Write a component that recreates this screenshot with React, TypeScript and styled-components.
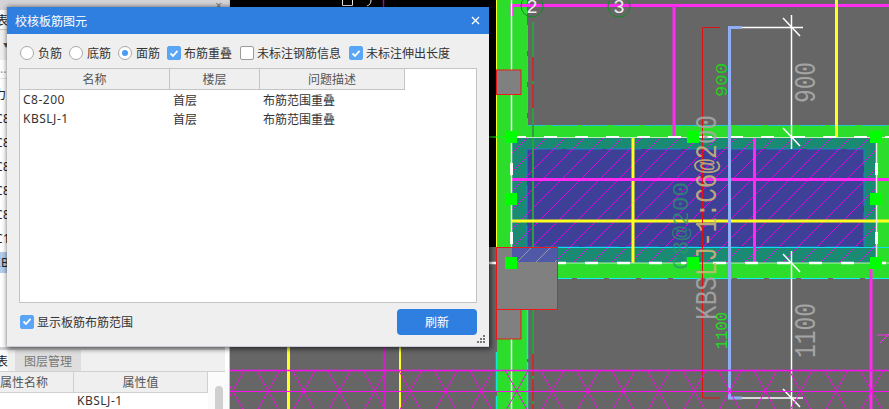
import React from "react";
import styled, { createGlobalStyle } from "styled-components";

const Global = createGlobalStyle`
  html, body { margin: 0; padding: 0; background: #666; }
  body { font-family: "Noto Sans", "Noto Sans CJK SC", sans-serif; font-size: 12px; color: #333; }
`;

const Page = styled.div`
  position: relative;
  display: flex;
  width: 889px;
  height: 409px;
  overflow: hidden;
`;

/* ---------- left panel ---------- */
const Sidebar = styled.aside`
  display: flex;
  flex-direction: column;
  width: 225px;
  height: 409px;
  background: #fff;
  border-right: 1px solid #c4c4c4;
  padding-right: 4px;
  flex: none;
`;
const PanelTop = styled.div`
  display: flex;
  justify-content: flex-end;
  align-items: center;
  height: 10px;
  padding-right: 7px;
  margin-right: -4px;
  background: #d4d4d8;
  color: #777;
  font-size: 12px;
  overflow: hidden;
`;
const ClipTab = styled.div`
  display: flex;
  justify-content: flex-end;
  align-items: center;
  width: 8px;
  height: 100%;
  overflow: hidden;
  white-space: nowrap;
  background: #fafafa;
  flex: none;
  color: #222;
  font-size: 12px;
`;
const TopTabs = styled.div`
  height: 19px;
  border-bottom: 1px solid #c8c8c8;
  background: #f4f4f4;
`;
const ToolRow = styled.div`
  height: 30px;
  background: #f0f0f0;
  color: #555;
  font-size: 6px;
  line-height: 30px;
  padding-left: 3px;
`;
const Search = styled.div`
  height: 18px;
  line-height: 18px;
  background: #fff;
  color: #999;
  border-bottom: 1px solid #e4e4e4;
  margin-bottom: 5px;
`;
const ListRow = styled.div<{ $selected?: boolean }>`
  height: 21px;
  margin-bottom: 3px;
  line-height: 21px;
  white-space: nowrap;
  overflow: hidden;
  font-size: 12px;
  letter-spacing: 0.5px;
  color: #222;
  background: ${(p) => (p.$selected ? "#b4cdec" : "transparent")};
`;
const RowText = styled.span<{ $shift: number }>`
  display: inline-block;
  margin-left: ${(p) => p.$shift}px;
`;
const Spacer = styled.div`
  flex: 1;
`;
const BottomGap = styled.div`
  height: 3px;
  background: #d0d0d0;
  flex: none;
`;
const BottomTabs = styled.div`
  display: flex;
  gap: 7px;
  height: 22px;
  box-sizing: border-box;
  background: #f0f0f0;
  border-bottom: 1px solid #d0d0d0;
  flex: none;
`;
const LayerTab = styled.div`
  display: flex;
  align-items: center;
  justify-content: center;
  width: 66px;
  background: #dedede;
  color: #777;
  font-size: 12px;
`;
const PropArea = styled.div`
  flex: none;
  height: 37px;
  display: flex;
  margin-right: -4px;
`;
const PropTable = styled.div`
  width: 208px;
  display: grid;
  grid-template-columns: 74px 134px;
  grid-template-rows: 21px 16px;
`;
const PropHead = styled.div<{ $left?: boolean }>`
  display: flex;
  align-items: center;
  justify-content: ${(p) => (p.$left ? "flex-start" : "center")};
  background: #efefef;
  border-right: 1px solid #cfcfcf;
  border-bottom: 1px solid #cfcfcf;
  color: #555;
  font-size: 12px;
`;
const PropCell = styled.div`
  padding-left: 3px;
  background: #fff;
  color: #333;
  font-size: 12px;
  letter-spacing: 0.5px;
  line-height: 16px;
`;
const ScrollTrack = styled.div`
  flex: 1;
  display: flex;
  justify-content: center;
  padding: 14px 0 0 0;
  background: #fbfbfb;
`;
const ScrollThumb = styled.div`
  width: 8px;
  background: #cfcfcf;
  border-radius: 4px 4px 0 0;
`;

/* ---------- canvas ---------- */
const Canvas = styled.main`
  flex: 1;
  height: 409px;
  background: #000;
`;
const Drawing = styled.svg`
  display: block;
`;

/* ---------- dialog ---------- */
const Dialog = styled.section`
  position: absolute;
  left: 7px;
  top: 7px;
  width: 482px;
  height: 340px;
  display: flex;
  flex-direction: column;
  background: #efefef;
  box-shadow: 1px 1px 5px 1px rgba(0, 0, 0, 0.6);
  border-bottom: 1px solid #c8ccd8;
  box-sizing: border-box;
`;
const TitleBar = styled.header`
  display: flex;
  justify-content: space-between;
  align-items: center;
  height: 27px;
  padding: 0 9px 0 8px;
  background: #2e7fe0;
  color: #fff;
  font-size: 12px;
  flex: none;
`;
const CloseX = styled.svg`
  display: block;
`;
const OptionRow = styled.div`
  display: flex;
  align-items: center;
  height: 34px;
  box-sizing: border-box;
  padding: 4px 0 0 13px;
  flex: none;
`;
const Option = styled.label<{ $mr: number }>`
  display: flex;
  align-items: center;
  gap: 4px;
  margin-right: ${(p) => p.$mr}px;
  color: #333;
  font-size: 12px;
  white-space: nowrap;
`;
const CheckOption = styled(Option)`
  gap: 3px;
`;
const Radio = styled.span<{ $on?: boolean }>`
  display: flex;
  align-items: center;
  justify-content: center;
  width: 14px;
  height: 14px;
  box-sizing: border-box;
  border-radius: 50%;
  border: 1px solid #a8a8a8;
  background: #fff;
  &::after {
    content: "";
    width: 6px;
    height: 6px;
    border-radius: 50%;
    background: ${(p) => (p.$on ? "#4a9cf5" : "transparent")};
  }
`;
const CheckBox = styled.span<{ $on?: boolean }>`
  display: flex;
  align-items: center;
  justify-content: center;
  width: 14px;
  height: 14px;
  box-sizing: border-box;
  border-radius: 2px;
  border: 1px solid ${(p) => (p.$on ? "#5aa5f5" : "#9a9a9a")};
  background: ${(p) => (p.$on ? "#5aa5f5" : "#fff")};
`;
const Table = styled.div`
  width: 458px;
  height: 235px;
  margin-left: 12px;
  box-sizing: border-box;
  background: #fff;
  border: 1px solid #c4c4c4;
  flex: none;
`;
const Head = styled.div`
  display: grid;
  grid-template-columns: 150px 90px 145px;
  width: 385px;
  height: 21px;
  box-sizing: border-box;
  background: #efefef;
  border-bottom: 1px solid #c4c4c4;
`;
const HeadCell = styled.div`
  display: flex;
  align-items: center;
  justify-content: center;
  border-right: 1px solid #c4c4c4;
  color: #555;
  font-size: 12px;
`;
const DataRow = styled.div`
  display: grid;
  grid-template-columns: 150px 90px 145px;
  height: 19px;
  align-items: center;
  font-size: 12px;
  color: #333;
`;
const DataCell = styled.div<{ $latin?: boolean }>`
  padding-left: 3px;
  white-space: nowrap;
  letter-spacing: ${(p) => (p.$latin ? "0.5px" : "0")};
`;
const Footer = styled.footer`
  display: flex;
  justify-content: space-between;
  align-items: center;
  flex: 1;
  padding: 0 12px 6px 13px;
`;
const RefreshButton = styled.button`
  width: 80px;
  height: 26px;
  border: 0;
  border-radius: 4px;
  background: #2e7fe0;
  color: #fff;
  font: inherit;
  font-size: 12px;
  padding: 0;
`;
const Grip = styled.svg`
  position: absolute;
  right: 3px;
  bottom: 2px;
`;

const Tick = () => (
  <svg width="10" height="9" viewBox="0 0 10 9">
    <path d="M1.5 4.5 L4 7 L8.5 1.8" fill="none" stroke="#fff" strokeWidth="1.8" />
  </svg>
);

/* ---------- CAD drawing, in page coordinates ---------- */
const PINK = "#ff2bf0";
const GREEN = "#2cdd2c";
const MONO = "Liberation Mono, monospace";
const latticeX = Array.from({ length: 19 }, (_, i) => 232.7 + i * 35.5);
const nodes: [number, number][] = [
  [511, 137], [693, 137], [876, 137],
  [511, 199], [876, 199],
  [511, 263], [693, 263], [876, 263],
];
const crosses = [27, 137, 263, 398];

const CadDrawing = () => (
  <Drawing width="659" height="409" viewBox="230 0 659 409">
    <defs>
      <pattern id="hatch" patternUnits="userSpaceOnUse" width="19" height="19">
        <line x1="-1" y1="20" x2="20" y2="-1" stroke="#f000f0" strokeWidth="0.9" />
      </pattern>
      <pattern id="hatchGrey" patternUnits="userSpaceOnUse" width="19" height="19">
        <line x1="-1" y1="20" x2="20" y2="-1" stroke="#a0a0a0" strokeWidth="0.9" />
      </pattern>
    </defs>
    {/* ground */}
    <rect x="230" y="0" width="659" height="409" fill="#000" />
    <rect x="230" y="247" width="659" height="162" fill="#666" />
    <rect x="497" y="0" width="392" height="247" fill="#666" />
    {/* green beams */}
    <rect x="497" y="0" width="30" height="409" fill={GREEN} />
    <rect x="497" y="125" width="392" height="153" fill={GREEN} />
    <line x1="496.5" y1="0" x2="496.5" y2="247" stroke="#ffff20" strokeWidth="1" />
    <line x1="489" y1="137" x2="511" y2="137" stroke="#00ff00" strokeWidth="1" />
    {/* slab */}
    <rect x="512" y="138" width="364" height="125" fill="#1a8a72" />
    <rect x="527" y="149" width="337" height="98" fill="#3e3f96" />
    <rect x="527" y="149" width="337" height="98" fill="none" stroke="#2080c8" strokeWidth="1" strokeDasharray="34 6" />
    <rect x="512" y="138" width="364" height="125" fill="url(#hatch)" />
    {/* cyan wall lines */}
    <path d="M527.5 25 V125.5 H889" fill="none" stroke="#22c8d0" strokeWidth="1" strokeDasharray="26 5" />
    <line x1="545" y1="247.5" x2="889" y2="247.5" stroke="#10e0f0" strokeWidth="1" />
    <line x1="545" y1="278.5" x2="889" y2="278.5" stroke="#10f0f0" strokeWidth="1" strokeDasharray="27 5" />
    <line x1="527.5" y1="309" x2="527.5" y2="409" stroke="#10e8d8" strokeWidth="1.5" strokeDasharray="50 3" />
    <line x1="496.5" y1="352" x2="496.5" y2="409" stroke="#10e8d8" strokeWidth="1.5" strokeDasharray="40 4" />
    {/* vertical green and red column guides */}
    <line x1="533" y1="22" x2="533" y2="409" stroke="#2aa040" strokeWidth="2" />
    <line x1="533" y1="57" x2="533" y2="108" stroke="#c03030" strokeWidth="2" strokeDasharray="24 3" />
    <line x1="533" y1="354" x2="533" y2="409" stroke="#c03030" strokeWidth="2" strokeDasharray="22 3" />
    {/* magenta / yellow rebar */}
    <path d="M512 16 V5.5 H889" fill="none" stroke={PINK} strokeWidth="3" />
    <line x1="674" y1="5" x2="674" y2="137" stroke={PINK} strokeWidth="3" />
    <line x1="836.5" y1="0" x2="836.5" y2="137" stroke="#ffff20" strokeWidth="3" />
    <line x1="633" y1="138" x2="633" y2="263" stroke="#ffff20" strokeWidth="3" />
    <line x1="754.5" y1="138" x2="754.5" y2="263" stroke={PINK} strokeWidth="3" />
    <line x1="512" y1="179.5" x2="889" y2="179.5" stroke={PINK} strokeWidth="3" />
    <line x1="512" y1="221" x2="889" y2="221" stroke="#ffff20" strokeWidth="3" />
    <line x1="871" y1="268" x2="871" y2="409" stroke={PINK} strokeWidth="3" />
    <path d="M877 335 H889 M880 343 L889 334" stroke={PINK} strokeWidth="1" fill="none" />
    <line x1="288.5" y1="347" x2="288.5" y2="409" stroke="#ffff20" strokeWidth="3" />
    <line x1="384" y1="347" x2="384" y2="409" stroke="#ee10e0" strokeWidth="1.5" />
    <line x1="400" y1="347" x2="400" y2="409" stroke="#ffff20" strokeWidth="2" />
    {/* white lines */}
    <line x1="511.5" y1="0" x2="511.5" y2="409" stroke="#f4f4f4" strokeWidth="1.5" />
    <rect x="510" y="163" width="3" height="12" fill="#fff" />
    <rect x="510" y="232" width="3" height="12" fill="#fff" />
    <line x1="513" y1="137.5" x2="889" y2="137.5" stroke="#b8f0b8" strokeWidth="1" />
    <line x1="513" y1="137" x2="889" y2="137" stroke="#fff" strokeWidth="2" strokeDasharray="13 18" />
    <line x1="489" y1="263" x2="889" y2="263" stroke="#b8f0b8" strokeWidth="1" />
    <line x1="489" y1="263" x2="889" y2="263" stroke="#fff" strokeWidth="2.5" strokeDasharray="13 19" />
    <line x1="876.5" y1="137" x2="876.5" y2="263" stroke="#e8e8e8" strokeWidth="1.5" />
    <rect x="875" y="163" width="3" height="12" fill="#fff" />
    <rect x="875" y="232" width="3" height="12" fill="#fff" />
    {/* red column boxes */}
    <rect x="496.5" y="70" width="24.5" height="24.5" fill="#808080" stroke="#f01818" strokeWidth="1" />
    <rect x="496.5" y="309.5" width="24.5" height="29.5" fill="#808080" stroke="#f01818" strokeWidth="1" />
    <rect x="496.5" y="247.5" width="61" height="62" fill="#808080" stroke="#f01818" strokeWidth="1" />
    <rect x="512" y="248" width="45" height="14" fill="#5058a8" />
    <rect x="512" y="248" width="45" height="14" fill="url(#hatchGrey)" />
    {/* dimension text, faint layer */}
    <text transform="translate(688 270) rotate(-90)" fontFamily={MONO} fontSize="22" fill="#2a9a6a" fillOpacity="0.7" textLength="88" lengthAdjust="spacingAndGlyphs">C8@200</text>
    {/* red guide */}
    <path d="M720 27.5 H702.5 V398 H720" fill="none" stroke="#e01010" strokeWidth="1" />
    {/* blue rebar and dimension lines */}
    <path d="M803 27.5 H730 M730 398 H803" fill="none" stroke="#fff" strokeWidth="1.5" />
    <path d="M742 27.5 H729.5 V398 H742" fill="none" stroke="#8faef5" strokeWidth="3" />
    <line x1="791.5" y1="15" x2="791.5" y2="149" stroke="#fff" strokeWidth="1.5" />
    <line x1="791.5" y1="251" x2="791.5" y2="409" stroke="#fff" strokeWidth="1.5" />
    {crosses.map((y) => (
      <line key={y} x1={783} y1={y - 9} x2={800} y2={y + 9} stroke="#fff" strokeWidth="1.5" />
    ))}
    {/* rotated labels */}
    <text transform="translate(716 320) rotate(-90)" fontFamily={MONO} fontSize="29" fillOpacity="0.9" textLength="205" lengthAdjust="spacingAndGlyphs">
      <tspan fill="#a8a8a8">KBS</tspan>
      <tspan fill="#c8b878">LJ-1:C6@2</tspan>
      <tspan fill="#a8a8a8">00</tspan>
    </text>
    <text transform="translate(727 97) rotate(-90)" fontFamily={MONO} fontSize="17" fill="#20d020" textLength="34" lengthAdjust="spacingAndGlyphs">900</text>
    <text transform="translate(727 349) rotate(-90)" fontFamily={MONO} fontSize="17" fill="#20e020" textLength="37" lengthAdjust="spacingAndGlyphs">1100</text>
    <text transform="translate(815 103) rotate(-90)" fontFamily={MONO} fontSize="30" fill="#a4a4a4" textLength="41" lengthAdjust="spacingAndGlyphs">900</text>
    <text transform="translate(815 358) rotate(-90)" fontFamily={MONO} fontSize="30" fill="#a4a4a4" textLength="55" lengthAdjust="spacingAndGlyphs">1100</text>
    {/* axis bubbles */}
    <circle cx="532" cy="6" r="11" fill="none" stroke="#148a28" strokeWidth="1" />
    <circle cx="619" cy="6" r="11" fill="none" stroke="#148a28" strokeWidth="1" />
    <text x="532" y="13" textAnchor="middle" fontFamily="Liberation Sans, sans-serif" fontSize="19" fill="#eee">2</text>
    <text x="619" y="13" textAnchor="middle" fontFamily="Liberation Sans, sans-serif" fontSize="19" fill="#eee">3</text>
    {/* lattice */}
    <line x1="230" y1="370.5" x2="889" y2="370.5" stroke="#ff10f0" strokeWidth="1.5" />
    <line x1="230" y1="391.5" x2="889" y2="391.5" stroke="#ff10f0" strokeWidth="1" />
    {latticeX.map((x) => (
      <g key={x} stroke="#f010e0" strokeWidth="1" fill="none">
        <line x1={x - 11.7} y1={370} x2={x + 10} y2={409} />
        <line x1={x + 11.7} y1={370} x2={x - 10} y2={409} />
      </g>
    ))}
    {/* nodes */}
    {nodes.map(([x, y]) => (
      <rect key={`${x}-${y}`} x={x - 6} y={y - 6} width="12" height="12" fill="#00ff00" />
    ))}
    {/* fragments at the top edge */}
    <path d="M342.5 0 V5.5 H352.5 V0" fill="none" stroke="#eee" strokeWidth="1" />
    <path d="M371 0 C371 3 370 5 367 6" fill="none" stroke="#eee" strokeWidth="1" />
    <line x1="383.5" y1="0" x2="383.5" y2="7" stroke="#a010a0" strokeWidth="1.5" />
  </Drawing>
);

const listRows: [string, number][] = [
  ["力筋", -6], ["C8-200", -5], ["C8-150", -5], ["C8-200", -5],
  ["C8-180", -5], ["C8-100", -5], ["C10-200", -5], ["KBSLJ-1", -7],
];

export default function App() {
  return (
    <Page>
      <Global />
      <Sidebar>
        <PanelTop>×</PanelTop>
        <TopTabs>
          <ClipTab>构件列表</ClipTab>
        </TopTabs>
        <ToolRow>▼</ToolRow>
        <Search>...</Search>
        {listRows.map(([t, shift], i) => (
          <ListRow key={i} $selected={i === 7}>
            <RowText $shift={shift}>{t}</RowText>
          </ListRow>
        ))}
        <Spacer />
        <BottomGap />
        <BottomTabs>
          <ClipTab>属性列表</ClipTab>
          <LayerTab>图层管理</LayerTab>
        </BottomTabs>
        <PropArea>
          <PropTable>
            <PropHead $left>属性名称</PropHead>
            <PropHead>属性值</PropHead>
            <PropCell />
            <PropCell>KBSLJ-1</PropCell>
          </PropTable>
          <ScrollTrack>
            <ScrollThumb />
          </ScrollTrack>
        </PropArea>
      </Sidebar>
      <Canvas>
        <CadDrawing />
      </Canvas>

      <Dialog>
        <TitleBar>
          校核板筋图元
          <CloseX width="9" height="9" viewBox="0 0 9 9">
            <path d="M1 1 L8 8 M8 1 L1 8" stroke="#fff" strokeWidth="1.4" />
          </CloseX>
        </TitleBar>
        <OptionRow>
          <Option $mr={7}><Radio />负筋</Option>
          <Option $mr={7}><Radio />底筋</Option>
          <Option $mr={7}><Radio $on />面筋</Option>
          <CheckOption $mr={8}><CheckBox $on><Tick /></CheckBox>布筋重叠</CheckOption>
          <CheckOption $mr={8}><CheckBox />未标注钢筋信息</CheckOption>
          <CheckOption $mr={0}><CheckBox $on><Tick /></CheckBox>未标注伸出长度</CheckOption>
        </OptionRow>
        <Table>
          <Head>
            <HeadCell>名称</HeadCell>
            <HeadCell>楼层</HeadCell>
            <HeadCell>问题描述</HeadCell>
          </Head>
          <DataRow>
            <DataCell $latin>C8-200</DataCell>
            <DataCell>首层</DataCell>
            <DataCell>布筋范围重叠</DataCell>
          </DataRow>
          <DataRow>
            <DataCell $latin>KBSLJ-1</DataCell>
            <DataCell>首层</DataCell>
            <DataCell>布筋范围重叠</DataCell>
          </DataRow>
        </Table>
        <Footer>
          <CheckOption $mr={0}><CheckBox $on><Tick /></CheckBox>显示板筋布筋范围</CheckOption>
          <RefreshButton>刷新</RefreshButton>
        </Footer>
        <Grip width="9" height="9" viewBox="0 0 9 9" fill="#777">
          <rect x="6" y="0" width="2" height="2" />
          <rect x="3" y="3" width="2" height="2" />
          <rect x="6" y="3" width="2" height="2" />
          <rect x="0" y="6" width="2" height="2" />
          <rect x="3" y="6" width="2" height="2" />
          <rect x="6" y="6" width="2" height="2" />
        </Grip>
      </Dialog>
    </Page>
  );
}
